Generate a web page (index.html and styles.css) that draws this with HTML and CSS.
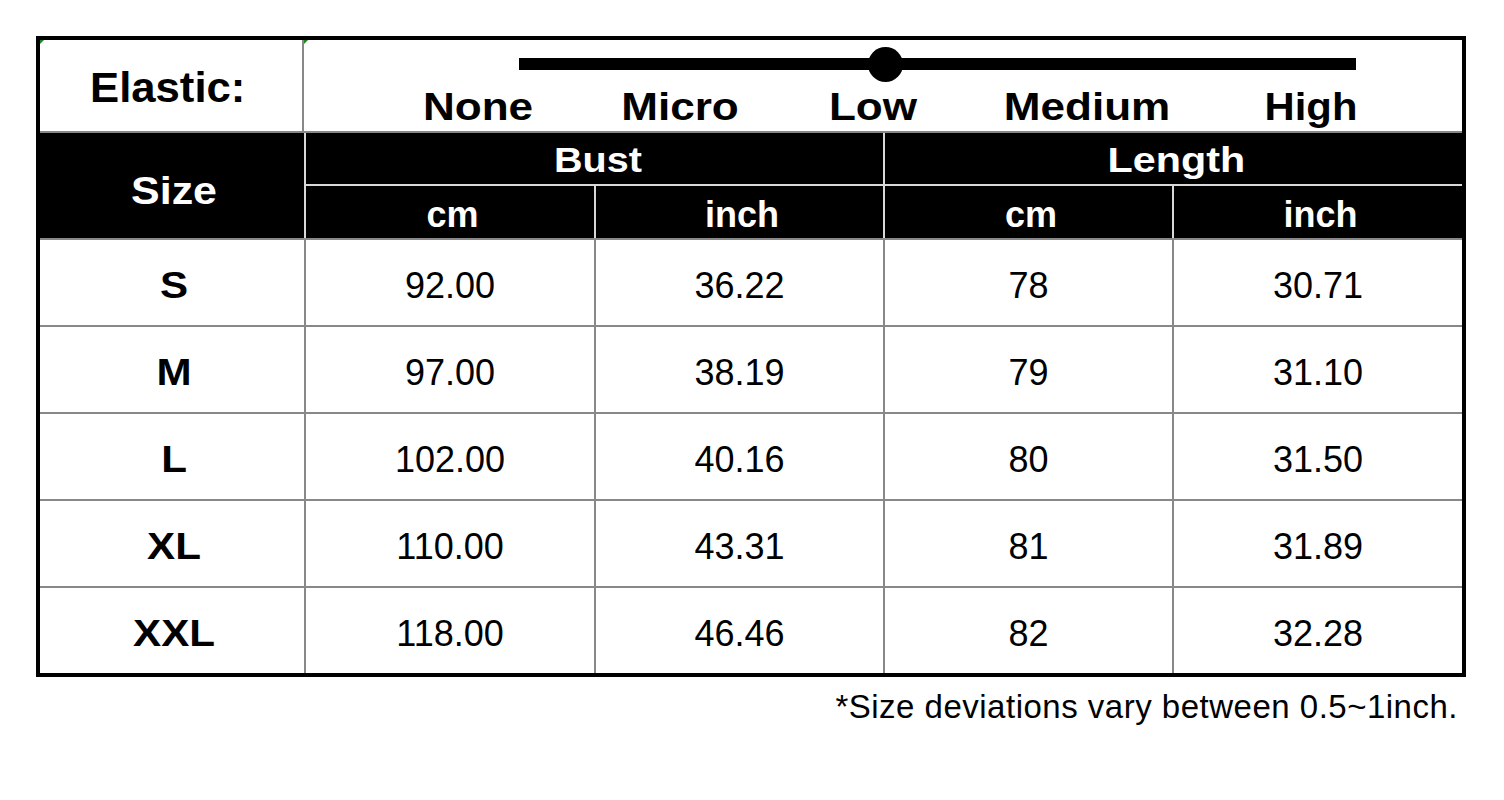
FILE: index.html
```html
<!DOCTYPE html>
<html>
<head>
<meta charset="utf-8">
<title>Size chart</title>
<link rel="stylesheet" href="styles.css">
</head>
<body>
<div class="page">
  <div class="chart">
    <div class="elastic-row">
      <div class="elastic-label marked"><span class="wide">Elastic:</span></div>
      <div class="elastic-scale marked">
        <svg class="slider" width="837" height="35" viewBox="0 0 837 35">
          <rect x="0" y="11" width="837" height="12" fill="#000"/>
          <circle cx="366.5" cy="17.5" r="17.5" fill="#000"/>
        </svg>
        <div class="levels">
          <span class="wide">None</span>
          <span class="wide">Micro</span>
          <span class="wide">Low</span>
          <span class="wide">Medium</span>
          <span class="wide">High</span>
        </div>
      </div>
    </div>
    <div class="head">
      <div class="h-size"><span class="wide">Size</span></div>
      <div class="h-group h-bust"><span class="wide">Bust</span></div>
      <div class="h-group h-length"><span class="wide">Length</span></div>
      <div class="h-unit">cm</div>
      <div class="h-unit">inch</div>
      <div class="h-unit">cm</div>
      <div class="h-unit">inch</div>
    </div>
    <div class="body">
      <div class="c size"><span class="wide">S</span></div><div class="c">92.00</div><div class="c">36.22</div><div class="c">78</div><div class="c">30.71</div>
      <div class="c size"><span class="wide">M</span></div><div class="c">97.00</div><div class="c">38.19</div><div class="c">79</div><div class="c">31.10</div>
      <div class="c size"><span class="wide">L</span></div><div class="c">102.00</div><div class="c">40.16</div><div class="c">80</div><div class="c">31.50</div>
      <div class="c size"><span class="wide">XL</span></div><div class="c">110.00</div><div class="c">43.31</div><div class="c">81</div><div class="c">31.89</div>
      <div class="c size"><span class="wide">XXL</span></div><div class="c">118.00</div><div class="c">46.46</div><div class="c">82</div><div class="c">32.28</div>
    </div>
  </div>
  <p class="note">*Size deviations vary between 0.5~1inch.</p>
</div>
</body>
</html>
```
FILE: styles.css
```css
html, body {
  margin: 0;
  padding: 0;
  background: #fff;
}
body {
  font-family: "Liberation Sans", Arial, sans-serif;
  color: #000;
}
.page {
  padding: 36px 0 0 36px;
  width: 1430px;
}
.chart {
  width: 1422px;
  border: 4px solid #000;
}
.wide {
  display: inline-block;
  transform: scaleX(1.15);
}
.elastic-row {
  display: flex;
  height: 91px;
  border-bottom: 2px solid #888;
}
.marked {
  position: relative;
}
.marked::before {
  content: "";
  position: absolute;
  left: 0;
  top: 0;
  border-top: 4px solid #1a8a1a;
  border-right: 4px solid transparent;
}
.elastic-label {
  width: 264px;
  border-right: 2px solid #888;
  display: flex;
  align-items: center;
  justify-content: center;
  padding: 4px 6px 0 0;
  box-sizing: border-box;
  font-size: 42px;
  font-weight: bold;
}
.elastic-label .wide {
  transform: scaleX(1.04);
}
.elastic-scale {
  flex: 1;
  padding-top: 7px;
}
.slider {
  display: block;
  margin-left: 215px;
}
.levels {
  display: grid;
  grid-template-columns: 202px 202px 184px 244px 204px;
  margin: 3px 0 0 73px;
  font-size: 38px;
  line-height: 44px;
  font-weight: bold;
  text-align: center;
}
.levels .wide {
  transform: scaleX(1.16);
}
.levels .wide:last-child {
  transform: scaleX(1.1);
}
.head {
  display: grid;
  grid-template-columns: 264px 288px 287px 287px 288px;
  grid-template-rows: 51px 52px;
  gap: 2px;
  background: #d8d8d8;
  border-bottom: 2px solid #888;
  color: #fff;
  font-weight: bold;
}
.head > div {
  background: #000;
  display: flex;
  align-items: center;
  justify-content: center;
}
.h-size {
  grid-row: 1 / span 2;
  font-size: 38px;
  padding: 12px 0 0 4px;
}
.h-size .wide {
  transform: scaleX(1.13);
}
.h-group {
  font-size: 35px;
  padding: 3px 0 0 6px;
}
.h-bust {
  grid-column: 2 / span 2;
}
.h-length {
  grid-column: 4 / span 2;
}
.h-bust .wide {
  transform: scaleX(1.13);
}
.h-length .wide {
  transform: scaleX(1.18);
}
.h-unit {
  font-size: 36px;
  padding: 6px 0 0 5px;
}
.body {
  display: grid;
  grid-template-columns: 264px 288px 287px 287px 288px;
  grid-auto-rows: 85px;
  gap: 2px;
  background: #888;
}
.c {
  background: #fff;
  display: flex;
  align-items: center;
  justify-content: center;
  font-size: 36px;
  padding-top: 6px;
  box-sizing: border-box;
}
.c.size {
  font-weight: bold;
  padding-left: 4px;
}
.c.size .wide {
  transform: scaleX(1.17);
}
.note {
  margin: 11px 0 0;
  padding-right: 8px;
  text-align: right;
  font-size: 33px;
  letter-spacing: 0.5px;
}
```
